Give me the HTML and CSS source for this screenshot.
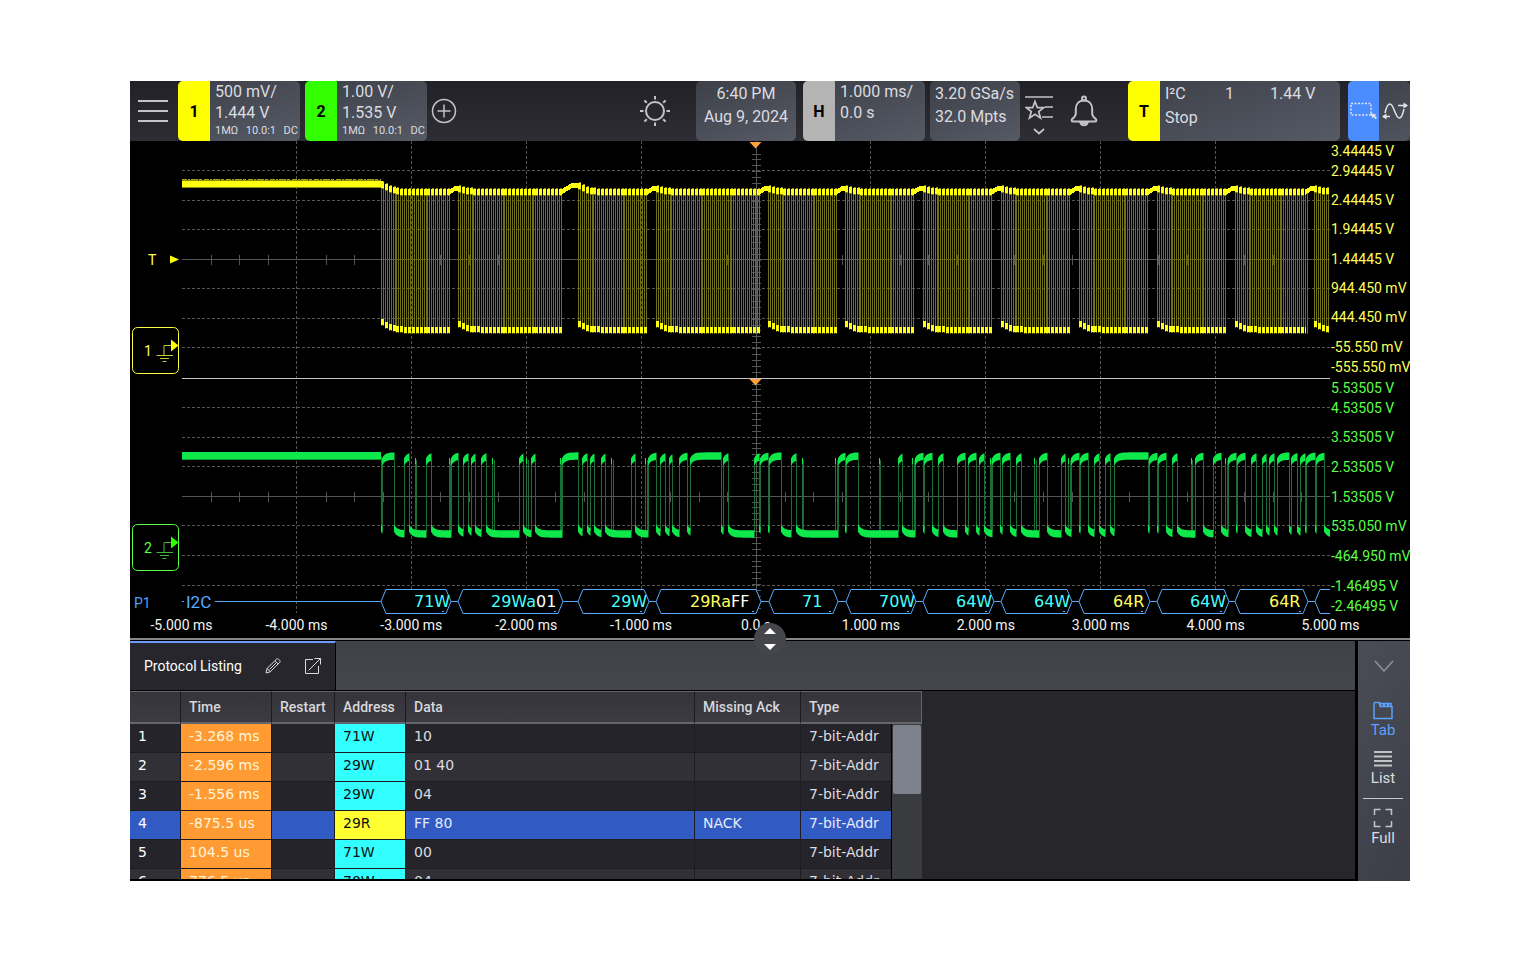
FILE: index.html
```html
<!DOCTYPE html>
<html lang="en">
<head>
<meta charset="utf-8">
<title>Oscilloscope – Protocol Listing</title>
<link rel="stylesheet" href="styles.css">
</head>
<body>
<main class="scope">
  <header class="topbar">
    <button class="icon-btn menu-btn" aria-label="Menu">
      <svg width="30" height="24" viewBox="0 0 30 24"><path d="M0 2H30M0 12H30M0 22H30"/></svg>
    </button>
    <button class="tile channel">
      <span class="badge yellow">1</span>
      <span class="lines"><span>500 mV/</span><span>1.444 V</span><span class="small"><i>1MΩ</i><i>10.0:1</i><i>DC</i></span></span>
    </button>
    <button class="tile channel">
      <span class="badge green">2</span>
      <span class="lines"><span>1.00 V/</span><span>1.535 V</span><span class="small"><i>1MΩ</i><i>10.0:1</i><i>DC</i></span></span>
    </button>
    <button class="icon-btn add-btn" aria-label="Add channel">
      <svg width="26" height="26" viewBox="0 0 26 26"><circle cx="13" cy="13" r="11.500"/><path d="M13 6.500V19.500M6.500 13H19.500"/></svg>
    </button>
    <span class="spacer"></span>
    <button class="icon-btn sun-btn" aria-label="Brightness">
      <svg width="32" height="32" viewBox="0 0 32 32"><circle cx="16" cy="16" r="9"/><path d="M16 1V4.500M16 27.500V31M1 16H4.500M27.500 16H31M5.400 5.400L7.800 7.800M24.200 24.200L26.600 26.600M5.400 26.600L7.800 24.200M24.200 7.800L26.600 5.400"/></svg>
    </button>
    <button class="tile clock"><span>6:40 PM</span><span>Aug 9, 2024</span></button>
    <button class="tile horizontal">
      <span class="badge grey">H</span>
      <span class="lines"><span>1.000 ms/</span><span>0.0 s</span></span>
    </button>
    <button class="tile clock rate"><span>3.20 GSa/s</span><span>32.0 Mpts</span></button>
    <button class="icon-btn star-btn" aria-label="Favorites">
      <svg width="28" height="40" viewBox="0 0 28 40"><path d="M0 2H28M20 12H28M17 22H28M9 34L14 38.500L19 34"/><path d="M10 6.500L12.300 12.600H18.800L13.700 16.600L15.500 23L10 19.300L4.500 23L6.300 16.600L1.200 12.600H7.700Z"/></svg>
    </button>
    <button class="icon-btn bell-btn" aria-label="Notifications">
      <svg width="28" height="32" viewBox="0 0 28 32"><circle cx="14" cy="3.500" r="2"/><path d="M14 5.500C8.500 5.500 5.800 9.500 5.800 14V18.500C5.800 21 4.800 22 2.600 23.600C1 25 1.500 26.600 3.400 26.600H24.600C26.500 26.600 27 25 25.400 23.600C23.200 22 22.200 21 22.200 18.500V14C22.200 9.500 19.500 5.500 14 5.500Z"/><path d="M10.500 28C11.500 31 16.500 31 17.500 28Z"/></svg>
    </button>
    <button class="tile trigger">
      <span class="badge yellow">T</span>
      <span class="trigger-info"><span>I²C</span><span>1</span><span>1.44 V</span><span class="wide">Stop</span></span>
    </button>
    <div class="mode">
      <button class="mode-btn active" aria-label="Zoom box">
        <svg width="27" height="18" viewBox="0 0 27 18"><path stroke-dasharray="2 1.500" d="M1 1.500H21V13H1Z"/><path class="solid" d="M20.500 11L26.500 12.800L24.800 13.800L27 16L25.600 17.200L23.500 15L22.400 16.600Z"/></svg>
      </button>
      <button class="mode-btn" aria-label="Drag waveform">
        <svg width="28" height="18" viewBox="0 0 28 18"><path d="M4 11C5.500 4 7 2 9 2C13 2 14 16 18.500 16C21 16 22 11 23 7M2 14.500H9M17 3.500H26"/><path class="solid" d="M1 14.500L5.500 11.500V17.500ZM27 3.500L22.500 0.500V6.500Z"/></svg>
      </button>
    </div>
  </header>

  <section class="plot" aria-label="Waveforms">
    <svg id="display" class="display" viewBox="130 141 1280 497" role="img" aria-label="I2C clock and data waveforms"></svg>
  </section>

  <div class="divider">
    <button class="splitter" aria-label="Resize panel">
      <svg width="12" height="22" viewBox="0 0 12 22"><path d="M0 6L6 0L12 6ZM0 16L6 22L12 16Z"/></svg>
    </button>
  </div>

  <section class="panel">
    <div class="panel-main">
      <div class="tabs">
        <div class="tab">
          <span>Protocol Listing</span>
          <button class="icon-btn" aria-label="Edit">
            <svg width="16" height="16" viewBox="0 0 16 16"><path class="thin" d="M1 15L2 10.500L11.500 1.200Q12.500 0.400 13.500 1.200L14.800 2.500Q15.500 3.500 14.700 4.400L5.300 13.800ZM2 10.500L5.300 13.800M10 2.800L13.300 6M11.500 4.500L4.500 11.500"/></svg>
          </button>
          <button class="icon-btn" aria-label="Open in window">
            <svg width="18" height="18" viewBox="0 0 18 18"><path class="thin" d="M9 2.500H1.500V16.500H14.500V9M4.500 13.500L16.500 1.500M10.500 1.500H16.500V7.500"/></svg>
          </button>
        </div>
      </div>
      <div class="panel-body">
        <div class="listing">
          <table>
            <colgroup><col class="c-num"><col class="c-time"><col class="c-restart"><col class="c-addr"><col class="c-data"><col class="c-ack"><col class="c-type"></colgroup>
            <thead><tr><th></th><th>Time</th><th>Restart</th><th>Address</th><th>Data</th><th>Missing Ack</th><th>Type</th></tr></thead>
            <tbody>
              <tr><td>1</td><td class="time">-3.268 ms</td><td></td><td class="write">71W</td><td>10</td><td></td><td>7-bit-Addr</td></tr>
              <tr><td>2</td><td class="time">-2.596 ms</td><td></td><td class="write">29W</td><td>01 40</td><td></td><td>7-bit-Addr</td></tr>
              <tr><td>3</td><td class="time">-1.556 ms</td><td></td><td class="write">29W</td><td>04</td><td></td><td>7-bit-Addr</td></tr>
              <tr class="selected"><td>4</td><td class="time">-875.5 us</td><td></td><td class="read">29R</td><td>FF 80</td><td>NACK</td><td>7-bit-Addr</td></tr>
              <tr><td>5</td><td class="time">104.5 us</td><td></td><td class="write">71W</td><td>00</td><td></td><td>7-bit-Addr</td></tr>
              <tr><td>6</td><td class="time">776.5 us</td><td></td><td class="write">70W</td><td>04</td><td></td><td>7-bit-Addr</td></tr>
            </tbody>
          </table>
          <div class="scroll"><div class="scroll-head"></div><div class="track"><div class="thumb"></div></div></div>
        </div>
      </div>
    </div>
    <nav class="side">
      <button class="side-btn collapse" aria-label="Collapse"><svg width="20" height="12" viewBox="0 0 20 12"><path d="M1 1L10 11L19 1"/></svg></button>
      <button class="side-btn current"><svg width="20" height="19" viewBox="0 0 20 19"><path d="M1 2V17.500H19V5.500H7L6.500 1.500H1M7.500 5V2.500H10.500V5M11.500 5V2.500H14.500V5M15.500 5V2.500H18V5"/></svg>Tab</button>
      <button class="side-btn"><svg width="18" height="18" viewBox="0 0 18 18"><path class="bars" d="M0 2H18M0 6.500H18M0 11H18M0 15.500H18"/></svg>List</button>
      <hr>
      <button class="side-btn"><svg width="20" height="20" viewBox="0 0 20 20"><path d="M1.500 7V1.500H7.500M12.500 1.500H18.500V7M18.500 13V18.500H12.500M7.500 18.500H1.500V13"/></svg>Full</button>
    </nav>
  </section>
</main>
<script src="display.js"></script>
</body>
</html>
```
FILE: styles.css
```css
* { box-sizing: border-box; }

body {
  margin: 0;
  padding: 81px 128px 82px 130px;
  background: #fff;
  font-family: Roboto, "Liberation Sans", sans-serif;
  color: #dcdce0;
}

button {
  margin: 0;
  padding: 0;
  border: 0;
  background: none;
  color: inherit;
  font: inherit;
  text-align: left;
}

svg { display: block; }

.scope { background: #000; }

/* Top bar */
.topbar {
  display: flex;
  align-items: stretch;
  height: 60px;
  background: linear-gradient(#222127, #2e2d34);
}

.icon-btn {
  display: flex;
  align-items: center;
  justify-content: center;
}
.icon-btn svg, .mode-btn svg, .side-btn svg {
  fill: none;
  stroke: #c4c4c8;
  stroke-width: 2;
}
.icon-btn .thin { stroke: #dcdce0; stroke-width: 1; }

.menu-btn { width: 48px; padding-right: 2px; }
.add-btn { width: 34px; }
.add-btn svg { stroke-width: 1.5; }
.spacer { flex: 1; }
.sun-btn { width: 82px; }
.star-btn { width: 38px; padding-top: 8px; }
.star-btn svg { stroke-width: 1.7; }
.bell-btn { width: 53px; padding-right: 2px; }

.tile {
  display: flex;
  overflow: hidden;
  border-radius: 5px;
  background: linear-gradient(160deg, #3d4048, #565a65);
  font-size: 16px;
  line-height: 21px;
  white-space: nowrap;
}
.channel { width: 122px; }
.channel + .channel { margin-left: 5px; }
.clock {
  flex-direction: column;
  align-items: center;
  width: 100px;
  line-height: 23px;
  padding-top: 1px;
}
.rate { width: 90px; margin-left: 5px; align-items: flex-start; padding-left: 5px; }
.horizontal { width: 122px; margin-left: 7px; }
.trigger { width: 212px; margin-left: 17px; }

.badge {
  display: flex;
  flex: none;
  align-items: center;
  justify-content: center;
  width: 32px;
  color: #000;
  font-weight: 700;
}
.yellow { background: #ffff00; }
.green { background: #32ff00; }
.grey { background: #b4b4b4; }

.lines {
  display: flex;
  flex: 1;
  flex-direction: column;
  padding-left: 5px;
}
.small {
  display: flex;
  justify-content: space-between;
  padding-right: 2px;
  font-size: 11px;
  line-height: 16px;
}
.small i { font-style: normal; }

.trigger-info {
  display: grid;
  grid-template-columns: 60px 45px 1fr;
  grid-auto-rows: 24px;
  align-items: center;
  flex: 1;
  padding-left: 5px;
  font-size: 16px;
}
.wide { grid-column: 1 / -1; }

.mode {
  display: flex;
  width: 62px;
  margin-left: 8px;
  overflow: hidden;
  border-radius: 5px;
  background: linear-gradient(160deg, #3d4048, #50545e);
}
.mode-btn { display: flex; flex: 1; align-items: center; justify-content: center; }
.mode-btn.active { background: #4b8cff; }
.mode-btn svg { stroke: #dfe3ea; stroke-width: 1.5; }
.mode-btn .solid { fill: #dfe3ea; stroke: none; }

/* Waveform display */
.display { width: 100%; height: auto; background: #000; font-size: 14px; }
.grid { stroke: #56564f; stroke-dasharray: 3 2; shape-rendering: crispEdges; }
.axis { stroke: #555; fill: none; shape-rendering: crispEdges; }
.split { stroke: #c4c4c4; shape-rendering: crispEdges; }
.clk-edge { stroke: #71701a; shape-rendering: crispEdges; fill: none; }
.clk { fill: #ffff10; shape-rendering: crispEdges; }
.clk-dim { fill: #8c8b10; shape-rendering: crispEdges; }
.clk-noise { stroke: #a5a410; stroke-dasharray: 5 1 2 1 7 1 3 2; fill: none; shape-rendering: crispEdges; }
.sda-edge { stroke: #1c6e35; shape-rendering: crispEdges; fill: none; }
.sda { fill: #0ee84a; }
.sda-dim { fill: #0b9932; }
.label-y { fill: #ffff5a; }
.label-g { fill: #5aff46; }
.label-w { fill: #f4f4f4; text-anchor: middle; }
.bus { fill: #000; stroke: #56aaff; }
.bus-line { stroke: #56aaff; fill: none; }
.bus-name { fill: #56aaff; font-size: 17px; }
.bus-id { fill: #4da0ff; font-size: 14px; }
.bus-text { font-family: "DejaVu Sans", sans-serif; font-size: 16px; }
.cyan { fill: #46ffff; }
.lemon { fill: #ffff5a; }
.white { fill: #fff; }
.box-y { fill: none; stroke: #ffff46; }
.box-g { fill: none; stroke: #5aff46; }
.lead-y { fill: none; stroke: #c8c83c; }
.lead-g { fill: none; stroke: #46b43c; }
.fill-y { fill: #ffff00; }
.fill-g { fill: #32ff00; }
.fill-o { fill: #ffa03c; }

/* Divider with the resize handle */
.divider {
  position: relative;
  height: 3px;
  border-bottom: 1px solid #000;
  background: #85858a;
}
.splitter {
  position: absolute;
  top: -15px;
  left: calc(50% - 16px);
  display: flex;
  align-items: center;
  justify-content: center;
  width: 32px;
  height: 32px;
  border-radius: 50%;
  background: #45454c;
}
.splitter svg { fill: #fff; }

/* Lower panel */
.panel { display: flex; gap: 3px; }
.panel-main { display: flex; flex: 1; flex-direction: column; background: #27262b; border-bottom: 2px solid #000; }
.tabs {
  display: flex;
  height: 50px;
  border-bottom: 1px solid #000;
  background: linear-gradient(#41414a, #45454e);
}
.tab {
  display: flex;
  align-items: center;
  gap: 23px;
  width: 206px;
  padding: 0 12px 1px 14px;
  border-top: 2px solid #6e9bff;
  border-right: 1px solid #000;
  background: #27262c;
  color: #fff;
  font-size: 14px;
  white-space: nowrap;
}
.panel-body { height: 188px; overflow: hidden; }
.listing { display: flex; width: 792px; }

table {
  width: 761px;
  border-collapse: separate;
  border-spacing: 0;
  table-layout: fixed;
  font-family: "DejaVu Sans", sans-serif;
  font-size: 14px;
}
.c-num { width: 51px; }
.c-time { width: 91px; }
.c-restart { width: 63px; }
.c-addr { width: 71px; }
.c-data { width: 289px; }
.c-ack { width: 106px; }
.c-type { width: 90px; }

th, td { padding: 0 0 0 8px; text-align: left; white-space: nowrap; }
th {
  height: 33px;
  border-top: 1px solid #65666b;
  border-right: 1px solid #1c1c20;
  border-bottom: 2px solid #65666b;
  background: linear-gradient(#34343a, #3b3b41);
  color: #d7d7dc;
  font-family: Roboto, "Liberation Sans", sans-serif;
  font-weight: 500;
}
th:last-child, td:last-child { border-right: 0; }
td {
  height: 29px;
  padding-bottom: 5px;
  border-right: 1px solid #1c1c22;
  border-bottom: 1px solid #1c1c22;
}
tbody tr { background: #25242a; }
tbody tr:nth-child(even) { background: #303036; }
td:first-child { color: #fff; }
.time { background: #ff9b32; color: #fff5dc; }
.write { background: #32ffff; color: #101010; }
.read { background: #ffff32; color: #101010; }
tbody tr.selected { background: #325ac3; color: #e6ebff; }

.scroll { display: flex; flex: 1; flex-direction: column; }
.scroll-head {
  height: 33px;
  border: solid #65666b;
  border-width: 1px 1px 2px 0;
  background: linear-gradient(#34343a, #3b3b41);
}
.track { flex: 1; padding: 1px; border-left: 1px solid #000; background: #3a3b3f; }
.thumb { height: 69px; border-radius: 2px; background: #7d828d; }

/* Right-hand rail */
.side {
  display: flex;
  flex-direction: column;
  align-items: center;
  width: 52px;
  padding-right: 2px;
  background: linear-gradient(120deg, #4a4c56, #3c3e47);
  font-size: 15px;
  line-height: 18px;
}
.side-btn { display: flex; flex-direction: column; align-items: center; gap: 1px; }
.side-btn svg { stroke-width: 1.5; }
.collapse { height: 60px; padding: 19px 0 0 2px; }
.collapse svg { stroke: #929499; }
.current { margin-bottom: 11px; color: #5aa0ff; }
.current svg { stroke: #5aa0ff; }
.side-btn .bars { stroke-width: 2; }
.side hr { width: 40px; height: 1px; margin: 11px 0 9px; border: 0; background: #c8c8cc; }
```
FILE: display.js
```js
const NS = "http://www.w3.org/2000/svg";
const svg = document.getElementById("display");

function add(tag, attrs, text) {
  const node = document.createElementNS(NS, tag);
  for (const key in attrs) node.setAttribute(key, attrs[key]);
  if (text !== undefined) node.textContent = text;
  svg.appendChild(node);
  return node;
}
const path = (cls, d) => add("path", { class: cls, d });
const text = (cls, x, y, value) => add("text", { class: cls, x, y }, value);

const LEFT = 182, RIGHT = 1330;
const columns = [296.5, 411.5, 526.5, 641.5, 870.5, 985.5, 1100.5, 1215.5];

/* Graticule */
for (const x of columns) path("grid", `M${x} 141V613`);
for (const y of [170.5, 200.5, 229.5, 288.5, 318.5, 347.5, 407.5, 437.5, 466.5, 525.5, 555.5, 585.5])
  path("grid", `M${LEFT} ${y}H${RIGHT}`);

let axis = `M${LEFT} 259.500H${RIGHT}M${LEFT} 496.500H${RIGHT}M756.500 141V613`;
for (let i = 1; i < 40; i++) {
  if (i % 4 === 0) continue;
  const x = Math.round(LEFT + i * 28.7) + 0.5;
  axis += `M${x} 255V265M${x} 492V502`;
}
for (let y = 153.5; y < 612; y += 5.9) axis += `M752 ${Math.round(y) + 0.5}H761`;
path("axis", axis);

/* Band of constant vertical thickness that settles exponentially on a level */
function band(x0, x1, level, offset, tau, half, origin) {
  const steps = Math.max(2, Math.ceil((x1 - x0) / 2));
  const upper = [], lower = [];
  for (let i = 0; i <= steps; i++) {
    const x = x0 + (x1 - x0) * i / steps;
    const y = level + offset * Math.exp(-(x - origin) / tau);
    upper.push(`${x.toFixed(1)} ${(y - half).toFixed(1)}`);
    lower.unshift(`${x.toFixed(1)} ${(y + half).toFixed(1)}`);
  }
  return "M" + upper.concat(lower).join("L") + "Z";
}

/* Channel 1: clock bursts */
const bursts = [[381, 450], [458, 562], [578, 648], [656, 760], [768, 837], [845, 914],
  [923, 992], [1001, 1071], [1079, 1149], [1157, 1227], [1235, 1306], [1314, 1330]];
const PERIOD = 3.87;
let edges = "", dim = "", bright = "";
bursts.forEach(([start, end], n) => {
  const peak = n === 0 ? -8 : n === 2 ? -7 : -4;
  const sag = n === 0 ? -8 : -6;
  for (let t = start; t < end - 1; t += PERIOD) {
    const x = Math.round(t);
    const high = 192.5 + peak * Math.exp(-(x - start) / 9);
    const base = 330 + sag * Math.exp(-(x - start) / 8);
    for (const e of [t, t + PERIOD / 2]) edges += `M${Math.round(e) + 0.5} ${Math.round(high)}V${Math.round(base) + 4}`;
    const stop = Math.min(x + 3, end);
    dim += `M${x + 1} ${Math.round(high - 4)}H${stop}V${Math.round(high + 4)}H${x + 1}Z`;
    bright += `M${x} ${Math.round(high - 3)}H${stop}V${Math.round(high + 3)}H${x}Z`;
    bright += `M${x} ${Math.round(base - 3)}H${stop}V${Math.round(base + 3)}H${x}Z`;
  }
  const next = bursts[n + 1];
  if (next) {
    const top = n === 1 ? 185.5 : 188;
    const bend = next[0] - (n === 1 ? 6 : 2);
    bright += `M${end - 1} 189.500L${bend} ${top - 2.5}H${next[0] + 1}V${top + 2.5}H${bend}L${end - 1} 195Z`;
  }
});
path("clk-edge", edges);
path("clk-dim", dim);
path("clk", bright);
path("clk-noise", "M182 179.500H381");
path("clk-dim", "M182 180H381V188H182Z");
path("clk", "M182 181H383V187H182Z");

/* Channel 2: data line, listed as intervals where it is high */
const highs = [[382, 394], [404, 409], [415, 416], [426, 431], [449, 450], [451, 458], [463, 468],
  [471, 475], [481, 486], [492, 494], [519, 523], [526, 528], [531, 535], [560, 561], [562, 578],
  [582, 587], [590, 594], [601, 605], [611, 613], [631, 635], [645, 647], [648, 656], [660, 665],
  [669, 672], [679, 687], [690, 721], [723, 728], [754, 759], [760, 768], [769, 781], [791, 796],
  [802, 803], [835, 837], [838, 845], [846, 858], [879, 880], [898, 902], [912, 914], [915, 923],
  [924, 932], [938, 943], [957, 965], [968, 976], [979, 984], [990, 991], [992, 1000], [1002, 1010],
  [1016, 1021], [1034, 1036], [1039, 1047], [1061, 1065], [1068, 1070], [1071, 1079], [1080, 1088],
  [1094, 1099], [1105, 1110], [1114, 1148], [1149, 1157], [1158, 1166], [1172, 1177], [1191, 1192],
  [1195, 1203], [1213, 1221], [1225, 1227], [1228, 1236], [1237, 1245], [1251, 1256], [1262, 1266],
  [1269, 1274], [1277, 1289], [1291, 1297], [1300, 1305], [1306, 1315], [1316, 1324]];
let low = 381, sdaEdges = "M381.500 456V531", sda = "";
for (const [up, down] of highs.concat([[RIGHT, RIGHT]])) {
  const glitch = up < RIGHT && down - up <= 2;
  if (up < RIGHT) sdaEdges += `M${up + 0.5} 460V531M${down + 0.5} 460V531`;
  if (glitch) {
    /* A glitch is too short to interrupt the low level around it */
    sda += `M${up} 458H${up + 1}V464H${up}Z`;
    continue;
  }
  sda += band(low, Math.min(up + 0.5, RIGHT), 534, -6, 3, 3.7, low);
  if (up < RIGHT) sda += band(up, down + 0.5, 456, 6, 3, 3.7, up);
  low = down;
}
path("sda-edge", sdaEdges);
path("sda", sda);
path("sda-dim", "M182 458H381V460H182Z");
path("sda", "M182 452H381V459H182Z");

path("split", `M${LEFT} 378.500H${RIGHT}`);
path("fill-o", "M749.500 142H761.500L755.500 148.500ZM749.500 379H761.500L755.500 385.500Z");

/* Voltage scales */
[["3.44445 V", 156], ["2.94445 V", 176], ["2.44445 V", 205], ["1.94445 V", 234], ["1.44445 V", 264],
  ["944.450 mV", 293], ["444.450 mV", 322], ["-55.550 mV", 352], ["-555.550 mV", 372]]
  .forEach(([label, y]) => text("label-y", 1331, y, label));
[["5.53505 V", 393], ["4.53505 V", 413], ["3.53505 V", 442], ["2.53505 V", 472], ["1.53505 V", 502],
  ["535.050 mV", 531], ["-464.950 mV", 561], ["-1.46495 V", 591], ["-2.46495 V", 611]]
  .forEach(([label, y]) => text("label-g", 1331, y, label));

/* Time scale */
for (let i = -5; i <= 5; i++)
  text("label-w", 756 + i * 114.9, 630, i === 0 ? "0.0 s" : i + ".000 ms");

/* Trigger level and ground markers */
text("label-y", 148, 265, "T");
path("fill-y", "M170 255.500L179 259.500L170 263.500Z");
function ground(y, suffix, value) {
  add("rect", { class: "box-" + suffix, x: 132.5, y, width: 46, height: 46, rx: 5 });
  text("label-" + suffix, 144, y + 28, value);
  path("lead-" + suffix, `M164 ${y + 28}V${y + 18}H171M156.500 ${y + 28}H173M160 ${y + 31}H169M162.500 ${y + 34}H166.500`);
  path("fill-" + suffix, `M171 ${y + 12}L178.500 ${y + 18}L171 ${y + 24}Z`);
}
ground(327.5, "y", "1");
ground(524.5, "g", "2");

/* Decoded bus */
text("bus-id", 134, 608, "P1");
text("bus-name", 186, 608, "I2C");
path("bus-line", `M182 601.500H184M215 601.500H${RIGHT}`);
const frames = [
  [381, 451, 414, "71W", "", "cyan"], [458, 563, 491, "29Wa", "01", "cyan"],
  [578, 649, 611, "29W", "", "cyan"], [656, 761, 690, "29Ra", "FF", "lemon"],
  [769, 838, 802, "71", "", "cyan"], [846, 916, 879, "70W", "", "cyan"],
  [923, 994, 956, "64W", "", "cyan"], [1001, 1072, 1034, "64W", "", "cyan"],
  [1079, 1150, 1113, "64R", "", "lemon"], [1157, 1229, 1190, "64W", "", "cyan"],
  [1235, 1308, 1269, "64R", "", "lemon"]];
for (const [a, b, x, address, data, color] of frames) {
  path("bus", `M${a} 601.500L${a + 5} 589.500H${b - 5}L${b} 601.500L${b - 5} 613.500H${a + 5}Z`);
  path("bus-line", `M${b - 9} 611.500H${b - 7}`);
  const label = add("text", { class: "bus-text", x, y: 607 });
  for (const [part, cls] of [[address, color], [data, "white"]]) {
    if (!part) continue;
    const span = document.createElementNS(NS, "tspan");
    span.setAttribute("class", cls);
    span.textContent = part;
    label.appendChild(span);
  }
}
path("bus", "M1330 589.500H1320L1315 601.500L1320 613.500H1330");
```
